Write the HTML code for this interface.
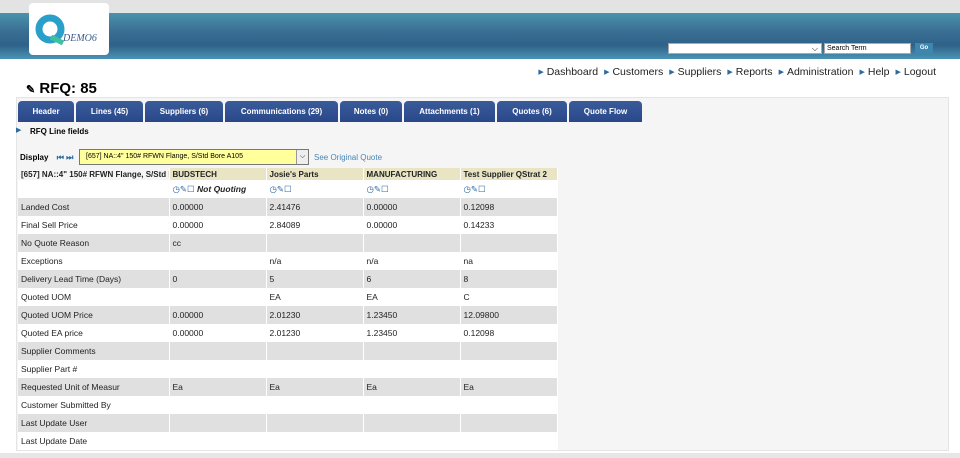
<!DOCTYPE html>
<html><head><meta charset="utf-8"><style>
*{margin:0;padding:0;box-sizing:border-box}
body{width:960px;height:458px;background:#fff;font-family:"Liberation Sans",Arial,sans-serif;position:relative;overflow:hidden}
.top{position:absolute;left:0;top:0;width:960px;height:13px;background:#e3e3e3}
.hdr{position:absolute;left:0;top:13px;width:960px;height:46px;background:linear-gradient(#4a93ad,#3a6e93 40%,#2f6288 70%,#4a94b5)}
.logo{position:absolute;left:29px;top:3px;width:80px;height:52px;background:#fff;border-radius:4px}
.nav{position:absolute;top:66px;right:24px;font-size:10.5px;color:#222}
.nav span{margin-left:6px}.nav i{font-style:normal;color:#2d6aa0;font-size:7px;margin-right:3px;vertical-align:1px}
.title{position:absolute;left:26px;top:80px;font-size:15px;font-weight:bold}
.box{position:absolute;left:16px;top:97px;width:933px;height:354px;background:#f5f5f5;border:1px solid #e4e4e4}
.tabs{position:absolute;left:18px;top:101px;display:flex}
.tab{height:21px;background:linear-gradient(#3a5b9a,#29488a);color:#fff;font-size:8px;font-weight:bold;text-align:center;line-height:21px;border-radius:4px 4px 0 0;margin-right:2px}
.small{font-size:8px}
table{position:absolute;left:18px;top:168px;border-collapse:collapse;font-size:8.5px;color:#222;table-layout:fixed;width:539px}
td{height:18px;padding:0 3px;border-right:1px solid #fff;white-space:nowrap;overflow:hidden}
tr.h td{height:12px;font-weight:bold;background:#e8e4c4;font-size:8px}
tr.h td:first-child{background:#f5f5f5}
tr.g td{background:#e0e0e0}tr.w td{background:#fff}
</style></head><body>
<div class="top"></div>
<div class="hdr">
 <div style="position:absolute;left:668px;top:30px;width:154px;height:11px;background:#fff;border:1px solid #aaa;font-size:8px;text-align:right;padding-right:3px;line-height:9px">⌵</div>
 <div style="position:absolute;left:824px;top:30px;width:87px;height:11px;background:#fff;border:1px solid #aaa;font-size:7px;line-height:9px;padding-left:2px">Search Term</div>
 <div style="position:absolute;left:915px;top:30px;width:18px;height:11px;background:#3d86b0;color:#fff;font-size:6px;text-align:center;line-height:11px;font-weight:bold">Go</div>
</div>
<div class="logo"><svg width="80" height="52"><circle cx="21" cy="26" r="11" fill="none" stroke="#2a9fc9" stroke-width="7"/><path d="M22 34 L34 40" stroke="#3fbfa0" stroke-width="5"/><text x="34" y="38" font-family="Liberation Serif" font-style="italic" font-size="10" fill="#3b5a8a">DEMO6</text></svg></div>
<div class="nav"><span><i>▶</i>Dashboard</span><span><i>▶</i>Customers</span><span><i>▶</i>Suppliers</span><span><i>▶</i>Reports</span><span><i>▶</i>Administration</span><span><i>▶</i>Help</span><span><i>▶</i>Logout</span></div>
<div class="title"><span style="font-size:11px">✎</span> RFQ: 85</div>
<div class="box"></div>
<div class="tabs">
<div class="tab" style="width:56px">Header</div><div class="tab" style="width:67px">Lines (45)</div><div class="tab" style="width:78px">Suppliers (6)</div><div class="tab" style="width:113px">Communications (29)</div><div class="tab" style="width:62px">Notes (0)</div><div class="tab" style="width:91px">Attachments (1)</div><div class="tab" style="width:70px">Quotes (6)</div><div class="tab" style="width:73px">Quote Flow</div>
</div>
<div style="position:absolute;left:16px;top:126px;font-size:7px;color:#2d6aa0">▶</div>
<div class="small" style="position:absolute;left:30px;top:127px;font-weight:bold">RFQ Line fields</div>
<div class="small" style="position:absolute;left:20px;top:153px;font-weight:bold">Display <span style="color:#2d6aa0;margin-left:6px">⏮ ⏭</span></div>
<div style="position:absolute;left:79px;top:149px;width:230px;height:16px;background:#ffff9c;border:1px solid #777;font-size:7px;line-height:14px;padding-left:6px">[657] NA::4" 150# RFWN Flange, S/Std Bore A105<span style="position:absolute;right:0;top:0;width:12px;height:14px;background:#eee;border-left:1px solid #999;text-align:center">⌵</span></div>
<div class="small" style="position:absolute;left:314px;top:153px;color:#4a86b5">See Original Quote</div>
<table>
<colgroup><col style="width:151px"><col style="width:97px"><col style="width:97px"><col style="width:97px"><col style="width:97px"></colgroup>
<tr class="h"><td>[657] NA::4" 150# RFWN Flange, S/Std Bc</td><td>BUDSTECH</td><td>Josie's Parts</td><td>MANUFACTURING</td><td>Test Supplier QStrat 2</td></tr>
<tr class="w"><td></td><td><span style="color:#2d6aa0">◷✎☐</span> <b><i>Not Quoting</i></b></td><td style="color:#2d6aa0">◷✎☐</td><td style="color:#2d6aa0">◷✎☐</td><td style="color:#2d6aa0">◷✎☐</td></tr>
<tr class="g"><td>Landed Cost</td><td>0.00000</td><td>2.41476</td><td>0.00000</td><td>0.12098</td></tr>
<tr class="w"><td>Final Sell Price</td><td>0.00000</td><td>2.84089</td><td>0.00000</td><td>0.14233</td></tr>
<tr class="g"><td>No Quote Reason</td><td>cc</td><td></td><td></td><td></td></tr>
<tr class="w"><td>Exceptions</td><td></td><td>n/a</td><td>n/a</td><td>na</td></tr>
<tr class="g"><td>Delivery Lead Time (Days)</td><td>0</td><td>5</td><td>6</td><td>8</td></tr>
<tr class="w"><td>Quoted UOM</td><td></td><td>EA</td><td>EA</td><td>C</td></tr>
<tr class="g"><td>Quoted UOM Price</td><td>0.00000</td><td>2.01230</td><td>1.23450</td><td>12.09800</td></tr>
<tr class="w"><td>Quoted EA price</td><td>0.00000</td><td>2.01230</td><td>1.23450</td><td>0.12098</td></tr>
<tr class="g"><td>Supplier Comments</td><td></td><td></td><td></td><td></td></tr>
<tr class="w"><td>Supplier Part #</td><td></td><td></td><td></td><td></td></tr>
<tr class="g"><td>Requested Unit of Measur</td><td>Ea</td><td>Ea</td><td>Ea</td><td>Ea</td></tr>
<tr class="w"><td>Customer Submitted By</td><td></td><td></td><td></td><td></td></tr>
<tr class="g"><td>Last Update User</td><td></td><td></td><td></td><td></td></tr>
<tr class="w"><td>Last Update Date</td><td></td><td></td><td></td><td></td></tr>
</table>
<div style="position:absolute;left:0;top:453px;width:960px;height:5px;background:#e6e6e6"></div>
</body></html>
